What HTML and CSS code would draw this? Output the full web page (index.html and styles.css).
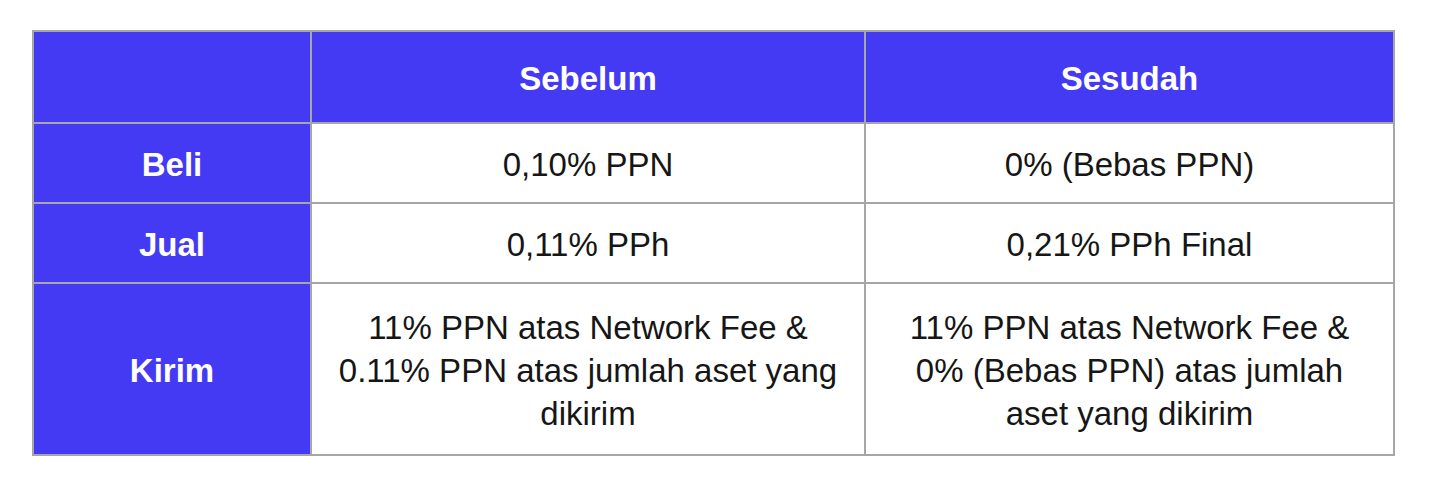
FILE: index.html
```html
<!DOCTYPE html>
<html lang="id">
<head>
<meta charset="utf-8">
<title>Pajak Kripto</title>
<link rel="stylesheet" href="styles.css">
</head>
<body>
<div class="tax-table">
  <div class="cell head"></div>
  <div class="cell head wide">Sebelum</div>
  <div class="cell head">Sesudah</div>

  <div class="cell label r1">Beli</div>
  <div class="cell wide r1">0,10% PPN</div>
  <div class="cell r1">0% (Bebas PPN)</div>

  <div class="cell label r2">Jual</div>
  <div class="cell wide r2">0,11% PPh</div>
  <div class="cell r2">0,21% PPh Final</div>

  <div class="cell label r3">Kirim</div>
  <div class="cell wide r3">11% PPN atas Network Fee &amp; 0.11% PPN atas jumlah aset yang dikirim</div>
  <div class="cell r3">11% PPN atas Network Fee &amp; 0% (Bebas PPN) atas jumlah aset yang dikirim</div>
</div>
</body>
</html>
```

FILE: styles.css
```css
html, body {
  margin: 0;
  background: #ffffff;
}
body {
  padding: 30px 0 0 32px;
  font-family: "Liberation Sans", Arial, Helvetica, sans-serif;
}
.tax-table {
  display: grid;
  grid-template-columns: 278px 554px 529px;
  grid-template-rows: 92px 80px 80px 172px;
  width: 1361px;
  border-top: 2px solid #a6a6a6;
  border-left: 2px solid #a6a6a6;
}
.cell {
  display: flex;
  align-items: center;
  justify-content: center;
  text-align: center;
  padding: 3px 28px 0;
  border-right: 2px solid #a6a6a6;
  border-bottom: 2px solid #a6a6a6;
  font-size: 33px;
  line-height: 43px;
  color: #161616;
  background: #ffffff;
}
.wide {
  padding: 3px 14px 0;
}
.head,
.label {
  background: #443af4;
  color: #ffffff;
  font-weight: bold;
}
```
